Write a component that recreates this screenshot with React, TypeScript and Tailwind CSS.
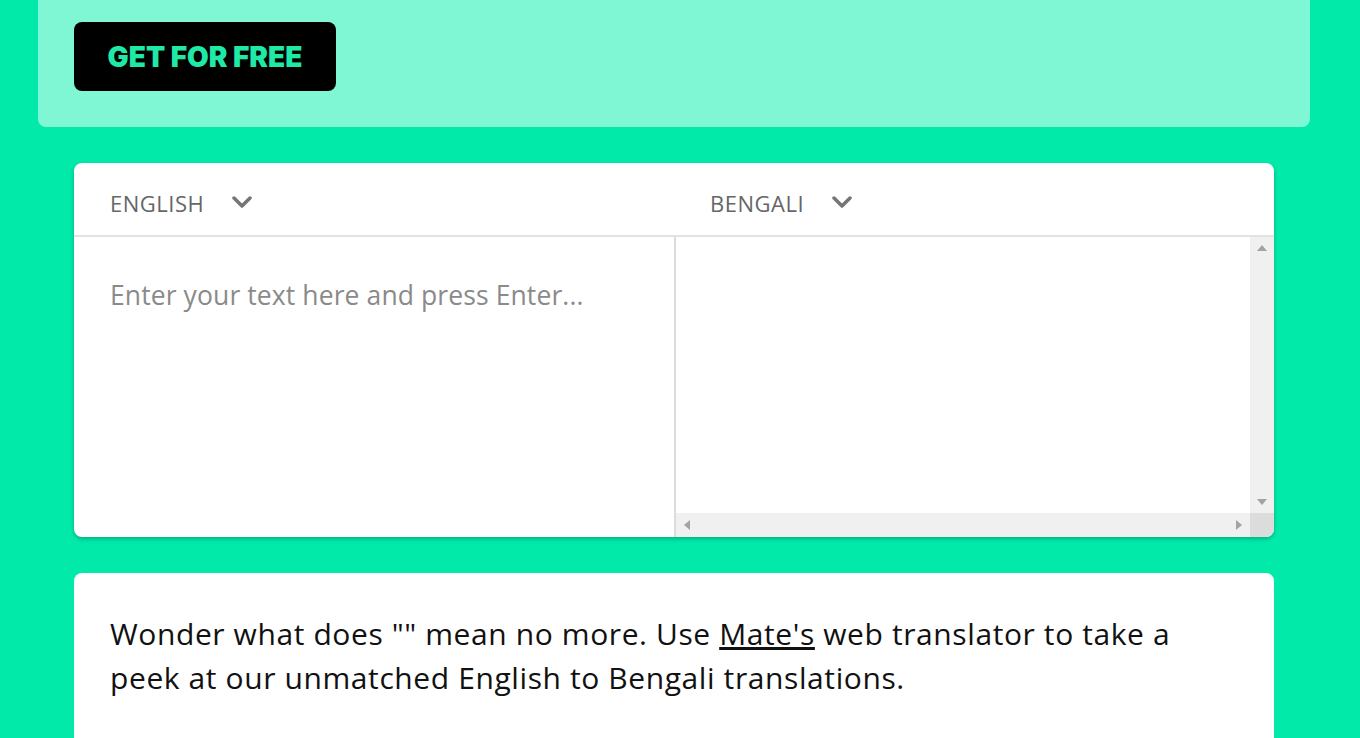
import React from "react";

const Chevron = () => (
  <svg width="20" height="12" viewBox="0 0 20 12" className="ml-7 mt-[-2px]">
    <path d="M2 2 L10 10 L18 2" fill="none" stroke="#757575" strokeWidth="3.5" strokeLinecap="round" strokeLinejoin="round" />
  </svg>
);

const Tri = ({ dir }: { dir: "up" | "down" | "left" | "right" }) => {
  const pts = {
    up: "0,8 5,2 10,8",
    down: "0,2 5,8 10,2",
    left: "8,0 2,5 8,10",
    right: "2,0 8,5 2,10",
  }[dir];
  return (
    <svg width="10" height="10" viewBox="0 0 10 10">
      <polygon points={pts} fill="#a3a3a3" />
    </svg>
  );
};

export default function App() {
  return (
    <div
      className="min-h-screen w-full bg-[#02eaa9] overflow-hidden"
      style={{ fontFamily: '"Open Sans", "Noto Sans", sans-serif' }}
    >
      {/* promo banner */}
      <div className="ml-[38px] w-[1272px] h-[127px] bg-[#80f7d4] rounded-b-lg px-9 pt-[22px]">
        <button
          className="h-[69px] w-[262px] rounded-lg bg-black text-[#1fe9a7] text-[28px] font-black"
          style={{ fontFamily: '"Inter", "Lato", sans-serif' }}
        >
          GET FOR FREE
        </button>
      </div>

      {/* translator card */}
      <div className="ml-[74px] w-[1200px] mt-9 bg-white rounded-lg shadow-[0_2px_4px_rgba(0,0,0,0.25)] overflow-hidden">
        <div className="flex h-[74px] border-b-2 border-[#e2e2e2]">
          <div className="w-1/2 flex items-center pl-9 pt-2 text-[22px] text-[#666] tracking-[0.5px]">
            ENGLISH
            <Chevron />
          </div>
          <div className="w-1/2 flex items-center pl-9 pt-2 text-[22px] text-[#666] tracking-[0.5px]">
            BENGALI
            <Chevron />
          </div>
        </div>
        <div className="flex h-[300px]">
          <div className="w-1/2 pl-9 pt-[42px] text-[26.5px] text-[#8a8a8a] leading-tight tracking-[0.1px]">
            Enter your text here and press Enter...
          </div>
          <div className="w-1/2 border-l-2 border-[#dcdcdc] flex flex-col">
            <div className="flex flex-1">
              <div className="flex-1" />
              <div className="w-[24px] bg-[#f0f0f0] flex flex-col items-center justify-between py-[6px]">
                <Tri dir="up" />
                <Tri dir="down" />
              </div>
            </div>
            <div className="flex h-[24px]">
              <div className="flex-1 bg-[#f0f0f0] flex items-center justify-between px-[6px]">
                <Tri dir="left" />
                <Tri dir="right" />
              </div>
              <div className="w-[24px] bg-[#dcdcdc]" />
            </div>
          </div>
        </div>
      </div>

      {/* description card */}
      <div className="ml-[74px] w-[1200px] mt-9 bg-white rounded-t-lg pl-9 pr-[60px] pt-[39px] pb-10 text-[30px] leading-[44px] text-[#111] tracking-[0.6px]">
        Wonder what does "" mean no more. Use{" "}
        <a className="underline text-[#111]">Mate's</a> web translator to take a
        peek at our unmatched English to Bengali translations.
      </div>
    </div>
  );
}
